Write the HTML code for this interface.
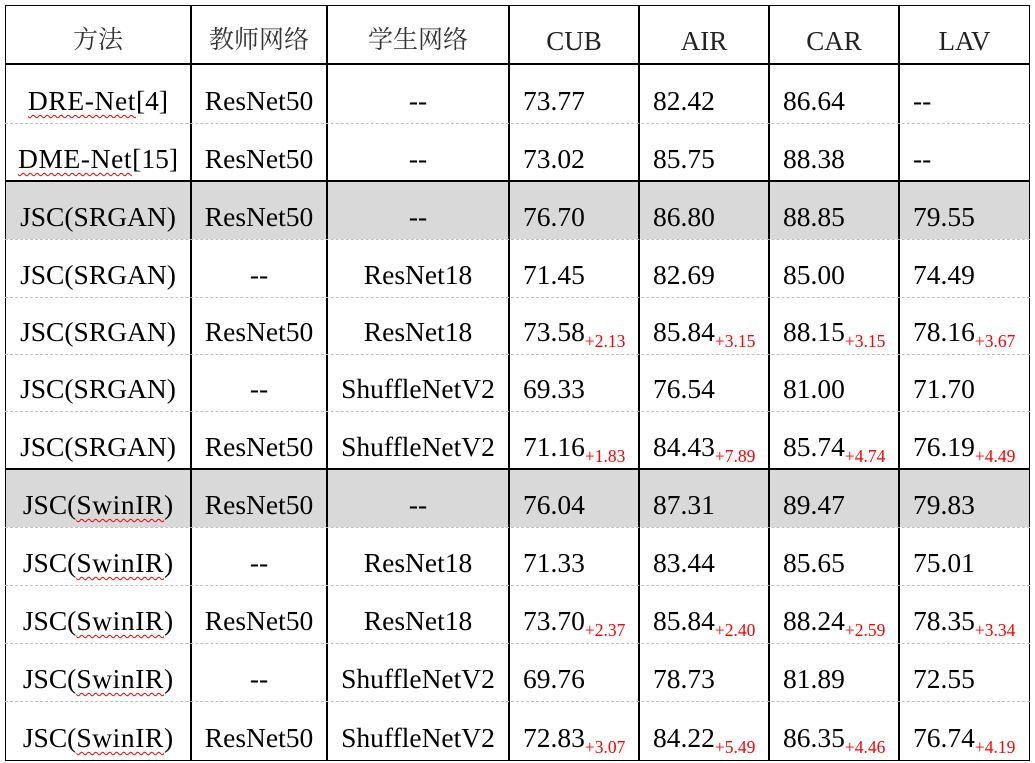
<!DOCTYPE html>
<html><head><meta charset="utf-8"><style>
html,body{margin:0;padding:0;background:#fff;width:1035px;height:763px;overflow:hidden}
.t{position:absolute;left:5px;top:5px;width:1025px;height:756px;border:1.5px solid #000;box-sizing:border-box}
.c{position:absolute;font-family:"Liberation Serif",serif;font-size:27.5px;color:#000;display:flex;align-items:flex-end;box-sizing:border-box;padding-bottom:8px;line-height:28px;white-space:nowrap}
.h{font-family:"Liberation Serif","Noto Serif CJK SC",serif;font-size:27px;color:#222;padding-bottom:9px}
.h.z{font-size:25px;color:#333}
.r{color:#f00;font-size:17.5px;line-height:16px;margin-bottom:-3px}
.w{text-decoration:underline wavy #e00;text-decoration-thickness:1px;text-underline-offset:4px;letter-spacing:0.6px}
.vl{position:absolute;top:5px;width:2px;height:756px;background:#000}
.hl{position:absolute;left:5px;width:1025px;height:0}
.s{border-top:2px solid #000}
.d{border-top:1px dashed #c0c0c0}
.g{position:absolute;left:6px;width:1023px;height:58px;background:#d9d9d9}
</style></head><body>
<div class="g" style="top:181px"></div>
<div class="g" style="top:469px"></div>
<div class="t"></div>
<div class="vl" style="left:190px"></div>
<div class="vl" style="left:326px"></div>
<div class="vl" style="left:508px"></div>
<div class="vl" style="left:638px"></div>
<div class="vl" style="left:768px"></div>
<div class="vl" style="left:898px"></div>
<div class="hl s" style="top:63px"></div>
<div class="hl d" style="top:123px"></div>
<div class="hl s" style="top:180px"></div>
<div class="hl d" style="top:239px"></div>
<div class="hl d" style="top:297px"></div>
<div class="hl d" style="top:354px"></div>
<div class="hl d" style="top:411px"></div>
<div class="hl s" style="top:468px"></div>
<div class="hl d" style="top:527px"></div>
<div class="hl d" style="top:585px"></div>
<div class="hl d" style="top:643px"></div>
<div class="hl d" style="top:701px"></div>
<div id="cells"></div>
<script>
var cols=[[5,186,1],[191,136,1],[327,182,1],[509,130,0],[639,130,0],[769,130,0],[899,131,0]];
var head=["方法","教师网络","学生网络","CUB","AIR","CAR","LAV"];
var rows=[
["<span class=w>DRE-Net</span>[4]","ResNet50","--","73.77","82.42","86.64","--"],
["<span class=w>DME-Net</span>[15]","ResNet50","--","73.02","85.75","88.38","--"],
["JSC(SRGAN)","ResNet50","--","76.70","86.80","88.85","79.55"],
["JSC(SRGAN)","--","ResNet18","71.45","82.69","85.00","74.49"],
["JSC(SRGAN)","ResNet50","ResNet18","73.58|+2.13","85.84|+3.15","88.15|+3.15","78.16|+3.67"],
["JSC(SRGAN)","--","ShuffleNetV2","69.33","76.54","81.00","71.70"],
["JSC(SRGAN)","ResNet50","ShuffleNetV2","71.16|+1.83","84.43|+7.89","85.74|+4.74","76.19|+4.49"],
["JSC(<span class=w>SwinIR</span>)","ResNet50","--","76.04","87.31","89.47","79.83"],
["JSC(<span class=w>SwinIR</span>)","--","ResNet18","71.33","83.44","85.65","75.01"],
["JSC(<span class=w>SwinIR</span>)","ResNet50","ResNet18","73.70|+2.37","85.84|+2.40","88.24|+2.59","78.35|+3.34"],
["JSC(<span class=w>SwinIR</span>)","--","ShuffleNetV2","69.76","78.73","81.89","72.55"],
["JSC(<span class=w>SwinIR</span>)","ResNet50","ShuffleNetV2","72.83|+3.07","84.22|+5.49","86.35|+4.46","76.74|+4.19"]];
var tops=[64,123,181,239,297,354,411,469,527,585,643,701,760];
var h="";
for(var j=0;j<7;j++){var c=cols[j];h+='<div class="c h'+(j<3?' z':'')+'" style="left:'+c[0]+'px;top:5px;width:'+c[1]+'px;height:59px;justify-content:center">'+head[j]+'</div>';}
for(var i=0;i<12;i++){for(var j=0;j<7;j++){var c=cols[j];var v=rows[i][j];
if(v.indexOf('|')>0){var p=v.split('|');v=p[0]+'<span class=r>'+p[1]+'</span>';}
h+='<div class="c" style="left:'+c[0]+'px;top:'+tops[i]+'px;width:'+c[1]+'px;height:'+(tops[i+1]-tops[i])+'px;'+(c[2]?'justify-content:center':'padding-left:14px')+'">'+v+'</div>';}}
document.getElementById('cells').innerHTML=h;
</script>
</body></html>
